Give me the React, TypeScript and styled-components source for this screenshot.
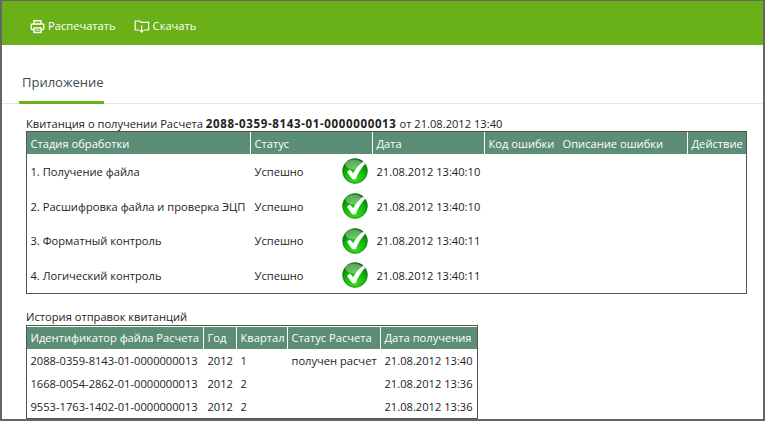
import React from "react";
import styled, { createGlobalStyle } from "styled-components";

const Global = createGlobalStyle`
  html, body { margin: 0; padding: 0; background: #fff; }
  * { box-sizing: border-box; }
`;

const Frame = styled.div`
  width: 765px;
  height: 421px;
  overflow: hidden;
  background: #fff;
  border-style: solid;
  border-color: #666;
  border-width: 1px 2px 2px 2px;
  font-family: "Open Sans", sans-serif;
  font-size: 11.15px;
  color: #222;
`;

const Toolbar = styled.div`
  height: 44px;
  background: #6ab018;
  display: flex;
  align-items: center;
  gap: 18px;
  padding: 6px 0 0 28px;
`;

const ToolButton = styled.div`
  display: flex;
  align-items: center;
  gap: 3px;
  color: #fff;
  font-size: 11.15px;
  line-height: 16px;
`;

const Tabs = styled.div`
  height: 59px;
  border-bottom: 1px solid #e6e6e6;
  padding-left: 17px;
  display: flex;
  align-items: flex-end;
`;

const Tab = styled.div`
  height: 39px;
  width: 85px;
  margin-bottom: -1px;
  padding: 7px 0 0 3px;
  border-bottom: 3px solid #6ab018;
  font-size: 13px;
  line-height: 20px;
  color: #3b4a55;
`;

const Content = styled.div`
  padding: 12px 0 0 24px;
`;

const Caption = styled.div<{ $h: number }>`
  line-height: 15px;
  height: ${(p) => p.$h}px;
  color: #222;
`;

const Strong = styled.b`
  font-weight: 700;
  font-size: 11.5px;
  letter-spacing: 0.65px;
`;

const Table = styled.table<{ $w: number; $top?: number }>`
  table-layout: fixed;
  width: ${(p) => p.$w}px;
  border-collapse: separate;
  border-spacing: 0;
  border: 1px solid #555;
  padding-top: ${(p) => p.$top ?? 0}px;
  font-size: 11.15px;
`;

const Head = styled.th<{ $sep?: boolean }>`
  background: #5c8d77;
  color: #fff;
  font-weight: 400;
  text-align: left;
  padding: 0 0 0 3.5px;
  height: 22px;
  white-space: nowrap;
  overflow: hidden;
  border-right: ${(p) => (p.$sep ? "1px solid #fff" : "0")};
`;

const Cell = styled.td<{ $h: number }>`
  height: ${(p) => p.$h}px;
  padding: 0 0 0 3.5px;
  white-space: nowrap;
  overflow: hidden;
  color: #222;
`;

const StatusWrap = styled.div`
  display: flex;
  align-items: center;
  justify-content: space-between;
  padding-right: 5px;
`;

const Gap = styled.div`
  height: 15px;
`;

const Printer = () => (
  <svg width="15" height="15" viewBox="0 0 15 15" fill="none" stroke="#fff" strokeWidth="1.4">
    <path d="M4 5V1.7h7V5" />
    <rect x="1.2" y="5" width="12.6" height="5.6" rx="1" />
    <rect x="4" y="9" width="7" height="4.5" fill="#6ab018" />
    <path d="M5.5 11.2h4" strokeWidth="1" />
  </svg>
);

const Download = () => (
  <svg width="16" height="15" viewBox="0 0 16 15" fill="none" stroke="#fff" strokeWidth="1.2">
    <path d="M5 11H1.2V2h4.6l1.2 1.4h7.6V11H10" />
    <path d="M7.6 6.5v6.5M5.8 11.2l1.8 2 1.8-2" />
  </svg>
);

const Check = ({ id }: { id: string }) => (
  <svg width="26" height="26" viewBox="0 0 26 26">
    <defs>
      <radialGradient id={id} cx="50%" cy="80%" r="75%">
        <stop offset="0%" stopColor="#3fe020" />
        <stop offset="55%" stopColor="#10b80a" />
        <stop offset="100%" stopColor="#067006" />
      </radialGradient>
    </defs>
    <circle cx="13" cy="13" r="12.4" fill={`url(#${id})`} stroke="#0d6b0b" strokeWidth="0.6" />
    <ellipse cx="12" cy="6.5" rx="8.5" ry="5" fill="#fff" opacity="0.35" />
    <path d="M5 13.8l3-2.4 3.2 3.8C13.6 10.6 17 6.6 21.4 3.6l2 1.8c-4.2 4.4-7.4 9.6-9.8 15.8h-3.4z" fill="#fff" />
  </svg>
);

const rows = [
  ["1. Получение файла", "21.08.2012 13:40:10"],
  ["2. Расшифровка файла и проверка ЭЦП", "21.08.2012 13:40:10"],
  ["3. Форматный контроль", "21.08.2012 13:40:11"],
  ["4. Логический контроль", "21.08.2012 13:40:11"],
];

const history = [
  ["2088-0359-8143-01-0000000013", "2012", "1", "получен расчет", "21.08.2012 13:40"],
  ["1668-0054-2862-01-0000000013", "2012", "2", "", "21.08.2012 13:36"],
  ["9553-1763-1402-01-0000000013", "2012", "2", "", "21.08.2012 13:36"],
];

export default function App() {
  return (
    <Frame>
      <Global />
      <Toolbar>
        <ToolButton>
          <Printer />
          Распечатать
        </ToolButton>
        <ToolButton>
          <Download />
          Скачать
        </ToolButton>
      </Toolbar>
      <Tabs>
        <Tab>Приложение</Tab>
      </Tabs>
      <Content>
        <Caption $h={15}>
          Квитанция о получении Расчета <Strong>2088-0359-8143-01-0000000013</Strong> от 21.08.2012 13:40
        </Caption>
        <Table $w={721}>
          <colgroup>
            <col width="224" />
            <col width="122" />
            <col width="112" />
            <col width="74" />
            <col width="129" />
            <col width="58" />
          </colgroup>
          <thead>
            <tr>
              <Head $sep>Стадия обработки</Head>
              <Head $sep>Статус</Head>
              <Head $sep>Дата</Head>
              <Head>Код ошибки</Head>
              <Head $sep>Описание ошибки</Head>
              <Head>Действие</Head>
            </tr>
          </thead>
          <tbody>
            {rows.map(([stage, date], i) => (
              <tr key={stage}>
                <Cell $h={34.7}>{stage}</Cell>
                <Cell $h={34.7}>
                  <StatusWrap>
                    Успешно
                    <Check id={`c${i}`} />
                  </StatusWrap>
                </Cell>
                <Cell $h={34.7}>{date}</Cell>
                <Cell $h={34.7} />
                <Cell $h={34.7} />
                <Cell $h={34.7} />
              </tr>
            ))}
          </tbody>
        </Table>
        <Gap />
        <Caption $h={16}>История отправок квитанций</Caption>
        <Table $w={452} $top={1}>
          <colgroup>
            <col width="177" />
            <col width="33" />
            <col width="51" />
            <col width="93" />
            <col width="96" />
          </colgroup>
          <thead>
            <tr>
              <Head $sep>Идентификатор файла Расчета</Head>
              <Head $sep>Год</Head>
              <Head $sep>Квартал</Head>
              <Head $sep>Статус Расчета</Head>
              <Head>Дата получения</Head>
            </tr>
          </thead>
          <tbody>
            {history.map((r) => (
              <tr key={r[0]}>
                {r.map((v, i) => (
                  <Cell $h={23} key={i}>
                    {v}
                  </Cell>
                ))}
              </tr>
            ))}
          </tbody>
        </Table>
      </Content>
    </Frame>
  );
}
